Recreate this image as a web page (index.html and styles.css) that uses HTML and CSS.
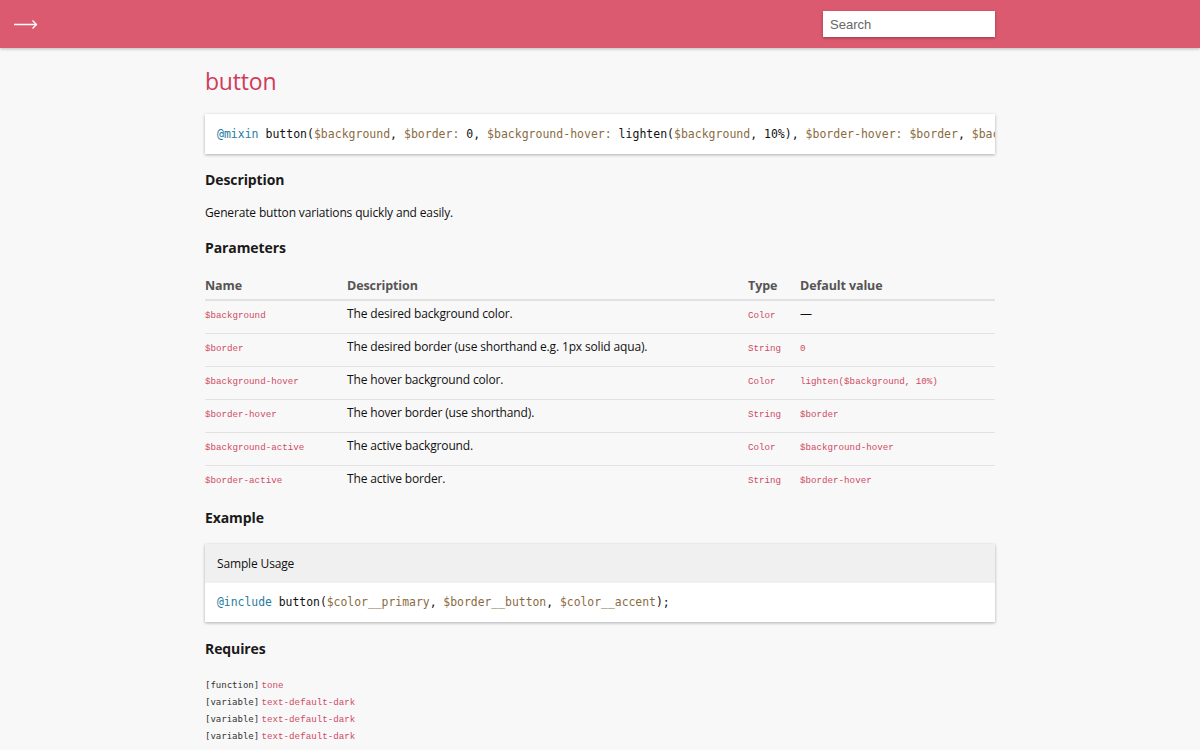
FILE: index.html
```html
<!DOCTYPE html>
<html>
<head>
<meta charset="utf-8">
<link rel="stylesheet" href="styles.css">
</head>
<body>
<header class="topbar">
  <svg class="arrow" width="24" height="10" viewBox="0 0 24 10"><path d="M0 5.5H22.5M18.5 1.5L22.5 5.5L18.5 9.5" fill="none" stroke="#fff" stroke-width="1.3"/></svg>
  <div class="search-wrap"><input class="search" type="text" placeholder="Search"></div>
</header>
<main class="content">
  <h1 class="title">button</h1>
  <pre class="signature"><span class="kw">@mixin</span> button(<span class="var">$background</span>, <span class="var">$border:</span> 0, <span class="var">$background-hover:</span> lighten(<span class="var">$background</span>, 10%), <span class="var">$border-hover:</span> <span class="var">$border</span>, <span class="var">$background-active:</span> <span class="var">$background-hover</span>, <span class="var">$border-active:</span> <span class="var">$border-hover</span>) { ... }</pre>

  <h2 class="heading">Description</h2>
  <p class="text">Generate button variations quickly and easily.</p>

  <h2 class="heading">Parameters</h2>
  <table class="params">
    <thead>
      <tr><th class="c-name">Name</th><th class="c-desc">Description</th><th class="c-type">Type</th><th>Default value</th></tr>
    </thead>
    <tbody>
      <tr><td><code class="red">$background</code></td><td>The desired background color.</td><td><code class="red">Color</code></td><td>—</td></tr>
      <tr><td><code class="red">$border</code></td><td>The desired border (use shorthand e.g. 1px solid aqua).</td><td><code class="red">String</code></td><td><code class="red">0</code></td></tr>
      <tr><td><code class="red">$background-hover</code></td><td>The hover background color.</td><td><code class="red">Color</code></td><td><code class="red">lighten($background, 10%)</code></td></tr>
      <tr><td><code class="red">$border-hover</code></td><td>The hover border (use shorthand).</td><td><code class="red">String</code></td><td><code class="red">$border</code></td></tr>
      <tr><td><code class="red">$background-active</code></td><td>The active background.</td><td><code class="red">Color</code></td><td><code class="red">$background-hover</code></td></tr>
      <tr><td><code class="red">$border-active</code></td><td>The active border.</td><td><code class="red">String</code></td><td><code class="red">$border-hover</code></td></tr>
    </tbody>
  </table>

  <h2 class="heading">Example</h2>
  <div class="example">
    <div class="example-head">Sample Usage</div>
    <pre class="example-code"><span class="kw">@include</span> button(<span class="var">$color__primary</span>, <span class="var">$border__button</span>, <span class="var">$color__accent</span>);</pre>
  </div>

  <h2 class="heading">Requires</h2>
  <ul class="requires">
    <li><span class="kind">[function]</span> <code class="red">tone</code></li>
    <li><span class="kind">[variable]</span> <code class="red">text-default-dark</code></li>
    <li><span class="kind">[variable]</span> <code class="red">text-default-dark</code></li>
    <li><span class="kind">[variable]</span> <code class="red">text-default-dark</code></li>
  </ul>
</main>
</body>
</html>
```

FILE: styles.css
```css
html, body {
  margin: 0;
  padding: 0;
}
body {
  background: #f8f8f8;
  font-family: "Open Sans", "Noto Sans", sans-serif;
  color: #111;
  overflow: hidden;
}
.topbar {
  height: 48px;
  background: #dc5a6f;
  box-shadow: 0 1px 3px rgba(0,0,0,0.25);
  display: flex;
  align-items: center;
  padding: 0 0 0 14px;
  position: relative;
}
.arrow {
  display: block;
  margin-top: -1px;
}
.search-wrap {
  margin-left: 785px;
  margin-top: 0;
}
.search {
  display: block;
  width: 172px;
  height: 26px;
  box-sizing: border-box;
  border: none;
  background: #fff;
  box-shadow: 0 1px 3px rgba(0,0,0,0.35);
  font-family: "Liberation Sans", Arial, sans-serif;
  font-size: 13px;
  padding: 0 7px;
  outline: none;
}
.search::placeholder {
  color: #666;
}
.content {
  width: 790px;
  margin: 0 auto;
  padding-top: 16px;
}
.title {
  font-weight: 400;
  font-size: 23px;
  letter-spacing: -0.2px;
  color: #d13c5a;
  margin: 0 0 16px 0;
  line-height: 34px;
}
.signature {
  margin: 0;
  background: #fff;
  box-shadow: 0 1px 3px rgba(0,0,0,0.3);
  padding: 0 12px;
  height: 40px;
  line-height: 40px;
  overflow: hidden;
  white-space: pre;
  font-family: "DejaVu Sans Mono", monospace;
  font-size: 11.5px;
  color: #111;
}
.kw { color: #2a7ba0; }
.var { color: #8a6b3f; }
.heading {
  font-size: 14px;
  letter-spacing: -0.1px;
  font-weight: 700;
  color: #1a1a1a;
  margin: 0;
  line-height: 20px;
}
.signature + .heading { margin-top: 16px; }
.text {
  font-size: 12px;
  letter-spacing: -0.15px;
  margin: 13px 0 0 0;
  line-height: 20px;
}
.text + .heading { margin-top: 15px; }
.params {
  width: 100%;
  border-collapse: collapse;
  margin-top: 13px;
  font-size: 12px;
  letter-spacing: -0.15px;
}
.params th {
  text-align: left;
  font-weight: 700;
  color: #555;
  font-size: 12.5px;
  letter-spacing: -0.1px;
  height: 28px;
  padding: 0;
  vertical-align: middle;
  border-bottom: 2px solid #e2e2e2;
}
.params td {
  height: 33px;
  padding: 0 0 6px 0;
  border-bottom: 1px solid #e2e2e2;
  vertical-align: middle;
  box-sizing: border-box;
}
.params tbody tr:last-child td { border-bottom: none; }
.c-name { width: 142px; }
.c-desc { width: 401px; }
.c-type { width: 52px; }
code.red {
  font-family: "Liberation Mono", "Courier New", monospace;
  font-size: 9.2px;
  letter-spacing: 0;
  color: #cf4a64;
  font-weight: 400;
}
.params + .heading { margin-top: 10px; }
.example {
  margin-top: 16px;
  box-shadow: 0 1px 3px rgba(0,0,0,0.3);
  background: #fff;
}
.example-head {
  background: #f0f0f0;
  height: 39px;
  line-height: 39px;
  padding: 0 12px;
  font-size: 12px;
  letter-spacing: -0.15px;
}
.example-code {
  margin: 0;
  height: 39px;
  line-height: 39px;
  padding: 0 12px;
  font-family: "DejaVu Sans Mono", monospace;
  font-size: 11.4px;
  color: #111;
}
.example + .heading { margin-top: 17px; }
.requires {
  list-style: none;
  margin: 17px 0 0 0;
  padding: 0;
}
.requires li {
  font-size: 9px;
  height: 17px;
  line-height: 17px;
  white-space: nowrap;
}
.kind {
  font-family: "DejaVu Sans Mono", monospace;
  color: #333;
  font-size: 9px;
}
```
